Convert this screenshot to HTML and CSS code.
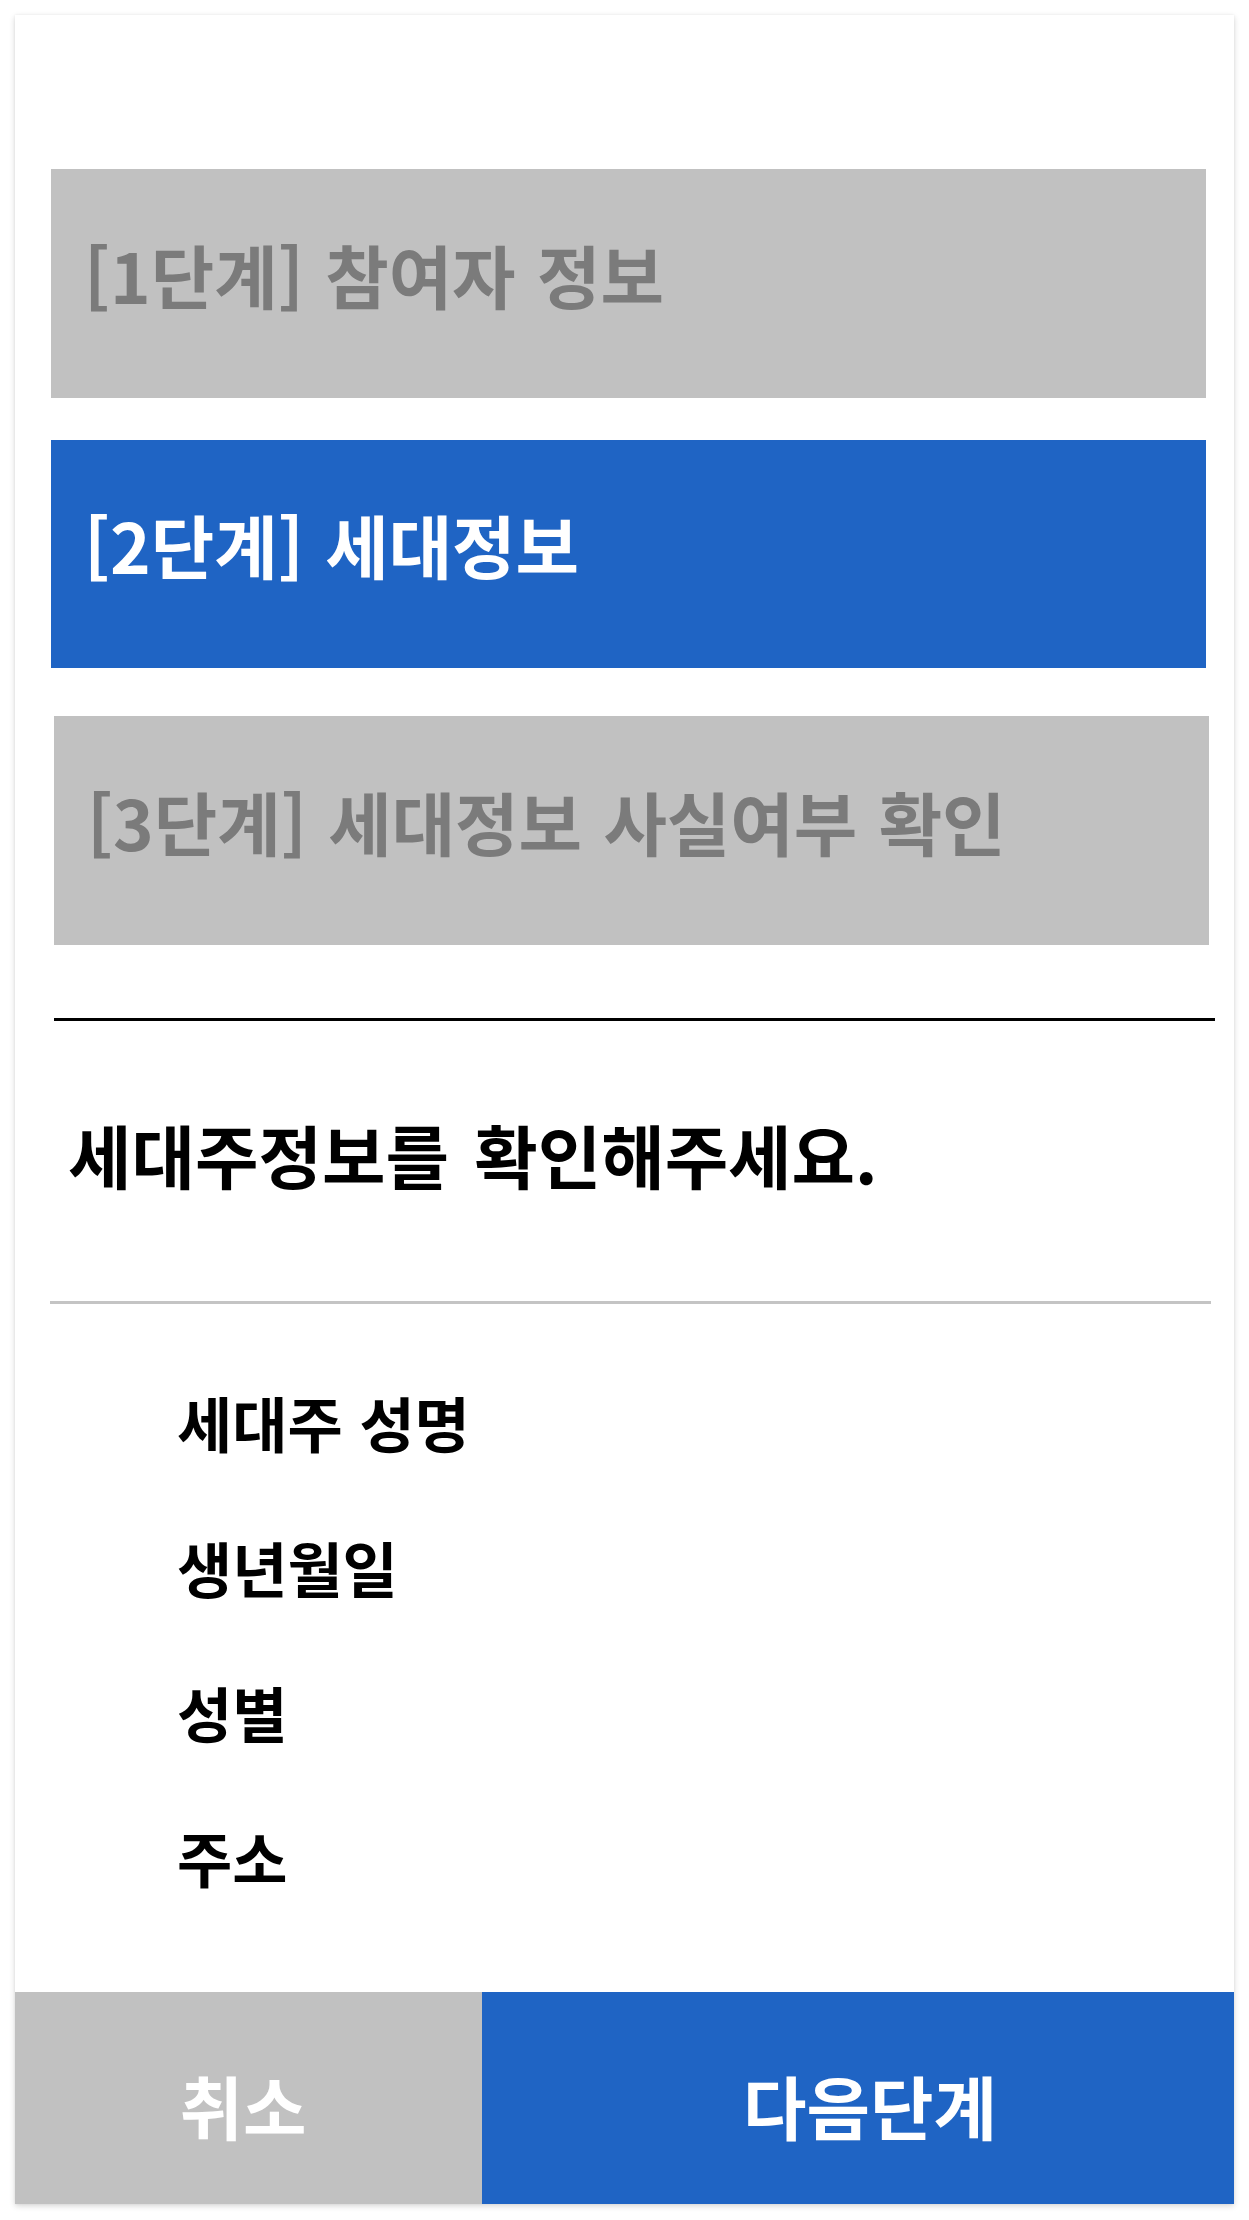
FILE: index.html
```html
<!DOCTYPE html>
<html lang="ko">
<head>
<meta charset="utf-8">
<title>세대정보</title>
<link rel="stylesheet" href="styles.css">
</head>
<body>
<div class="card">
  <div class="steps">
    <div class="step step-1 inactive">[1단계] 참여자 정보</div>
    <div class="step step-2 active">[2단계] 세대정보</div>
    <div class="step step-3 inactive">[3단계] 세대정보 사실여부 확인</div>
  </div>
  <div class="rule-dark"></div>
  <div class="heading">세대주정보를 확인해주세요.</div>
  <div class="rule-light"></div>
  <ul class="fields">
    <li class="field">세대주 성명</li>
    <li class="field">생년월일</li>
    <li class="field">성별</li>
    <li class="field">주소</li>
  </ul>
  <div class="actions">
    <button class="btn btn-cancel">취소</button>
    <button class="btn btn-next">다음단계</button>
  </div>
</div>
</body>
</html>
```

FILE: styles.css
```css
html, body {
  margin: 0;
  padding: 0;
  background: #ffffff;
}

body {
  font-family: "Noto Sans CJK KR", "Noto Sans", sans-serif;
  font-weight: 700;
}

.card {
  margin: 15px;
  width: 1219px;
  height: 2189px;
  box-sizing: border-box;
  background: #ffffff;
  box-shadow: 0 2px 6px rgba(0, 0, 0, 0.16), 0 0 2px rgba(0, 0, 0, 0.06);
  display: flex;
  flex-direction: column;
  padding-top: 154px;
}

.steps {
  display: flex;
  flex-direction: column;
}

.step {
  width: 1155px;
  height: 229px;
  box-sizing: border-box;
  display: flex;
  align-items: center;
  padding-left: 33px;
  padding-bottom: 19px;
  font-size: 69px;
  line-height: 1;
  word-spacing: 2px;
  white-space: nowrap;
}

.step-1 {
  margin-left: 36px;
}

.step-2 {
  margin-left: 36px;
  margin-top: 42px;
  height: 228px;
}

.step-3 {
  margin-left: 39px;
  margin-top: 48px;
}

.inactive {
  background: #c1c1c1;
  color: #7b7b7b;
}

.active {
  background: #1f64c4;
  color: #ffffff;
}

.rule-dark {
  margin-top: 73px;
  margin-left: 39px;
  width: 1161px;
  height: 3px;
  background: #000000;
}

.heading {
  height: 280px;
  box-sizing: border-box;
  display: flex;
  align-items: center;
  padding-left: 53px;
  padding-bottom: 14px;
  font-size: 69px;
  line-height: 1;
  word-spacing: 6px;
  color: #000000;
  white-space: nowrap;
}

.rule-light {
  margin-left: 35px;
  width: 1161px;
  height: 3px;
  background: #c4c4c4;
}

.fields {
  list-style: none;
  margin: 51px 0 0 0;
  padding: 0 0 0 162px;
  display: flex;
  flex-direction: column;
}

.field {
  height: 145px;
  box-sizing: border-box;
  display: flex;
  align-items: center;
  padding-bottom: 12px;
  font-size: 60px;
  line-height: 1;
  color: #000000;
}

.actions {
  margin-top: auto;
  display: flex;
  height: 212px;
}

.btn {
  border: none;
  margin: 0;
  font-family: inherit;
  font-weight: 700;
  font-size: 69px;
  line-height: 1;
  color: #ffffff;
  display: flex;
  align-items: center;
  justify-content: center;
  box-sizing: border-box;
  padding-top: 16px;
}

.btn-cancel {
  width: 467px;
  background: #c1c1c1;
  padding-right: 17px;
}

.btn-next {
  flex: 1;
  background: #1f64c4;
  padding-left: 30px;
}
```
